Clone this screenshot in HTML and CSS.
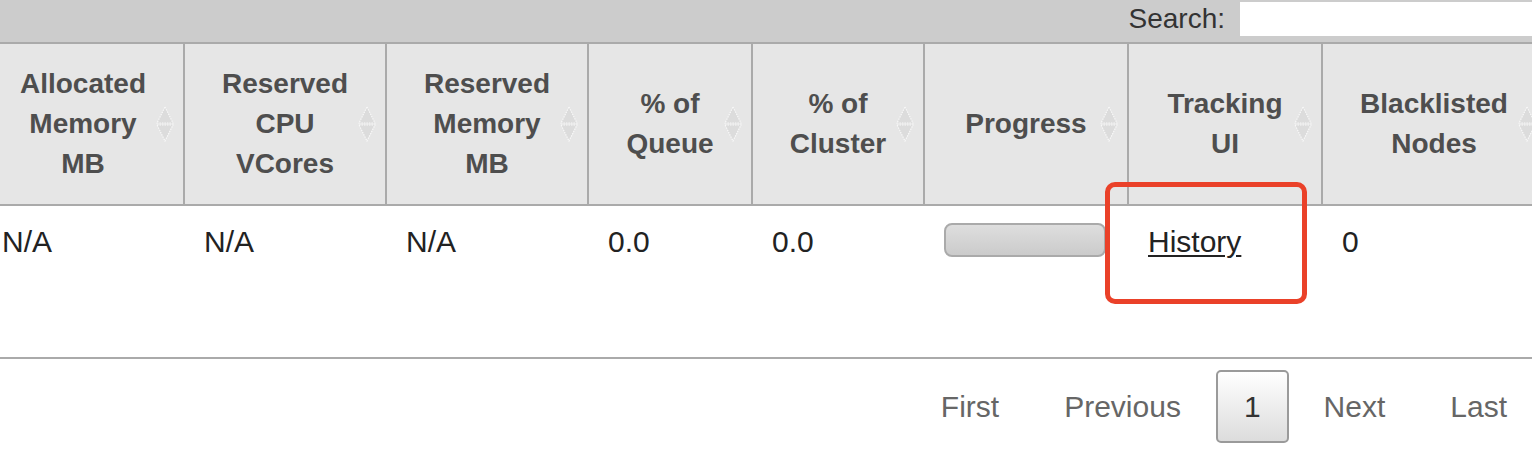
FILE: index.html
```html
<!DOCTYPE html>
<html>
<head>
<meta charset="utf-8">
<title>Applications</title>
<link rel="stylesheet" href="styles.css">
</head>
<body>
<div class="page">
  <div class="filter">
    <label class="filter-label">Search:</label>
    <input class="search" type="text">
  </div>
  <table class="grid">
    <thead>
      <tr>
        <th class="w202"><span>Allocated Memory MB</span><svg class="sort" viewBox="0 0 18 36" width="18" height="36"><path d="M9 1 L17 17 L1 17 Z"/><path d="M1 19 L17 19 L9 35 Z"/></svg></th>
        <th class="w202"><span>Reserved CPU VCores</span><svg class="sort" viewBox="0 0 18 36" width="18" height="36"><path d="M9 1 L17 17 L1 17 Z"/><path d="M1 19 L17 19 L9 35 Z"/></svg></th>
        <th class="w202"><span>Reserved Memory MB</span><svg class="sort" viewBox="0 0 18 36" width="18" height="36"><path d="M9 1 L17 17 L1 17 Z"/><path d="M1 19 L17 19 L9 35 Z"/></svg></th>
        <th class="w164"><span>% of Queue</span><svg class="sort" viewBox="0 0 18 36" width="18" height="36"><path d="M9 1 L17 17 L1 17 Z"/><path d="M1 19 L17 19 L9 35 Z"/></svg></th>
        <th class="w172"><span>% of Cluster</span><svg class="sort" viewBox="0 0 18 36" width="18" height="36"><path d="M9 1 L17 17 L1 17 Z"/><path d="M1 19 L17 19 L9 35 Z"/></svg></th>
        <th class="w204"><span>Progress</span><svg class="sort" viewBox="0 0 18 36" width="18" height="36"><path d="M9 1 L17 17 L1 17 Z"/><path d="M1 19 L17 19 L9 35 Z"/></svg></th>
        <th class="w194"><span>Tracking UI</span><svg class="sort" viewBox="0 0 18 36" width="18" height="36"><path d="M9 1 L17 17 L1 17 Z"/><path d="M1 19 L17 19 L9 35 Z"/></svg></th>
        <th class="w224"><span>Blacklisted Nodes</span><svg class="sort" viewBox="0 0 18 36" width="18" height="36"><path d="M9 1 L17 17 L1 17 Z"/><path d="M1 19 L17 19 L9 35 Z"/></svg></th>
      </tr>
    </thead>
    <tbody>
      <tr>
        <td>N/A</td>
        <td>N/A</td>
        <td>N/A</td>
        <td>0.0</td>
        <td>0.0</td>
        <td class="prog"><div class="bar"></div></td>
        <td><a class="link" href="#">History</a></td>
        <td>0</td>
      </tr>
    </tbody>
  </table>
  <div class="paging">
    <a class="pg">First</a>
    <a class="pg">Previous</a>
    <a class="pg current">1</a>
    <a class="pg">Next</a>
    <a class="pg">Last</a>
  </div>
  <div class="annot"></div>
</div>
</body>
</html>
```

FILE: styles.css
```css
html, body {
  margin: 0;
  padding: 0;
  background: #fff;
  overflow: hidden;
}

body {
  font-family: "Liberation Sans", Arial, Helvetica, sans-serif;
  width: 1532px;
  height: 452px;
}

.page {
  position: relative;
  width: 1564px;
  margin-left: -19px;
}

.filter {
  display: flex;
  justify-content: flex-end;
  align-items: center;
  background: #cccccc;
  height: 42px;
  box-sizing: border-box;
  padding: 2px 0 6px;
}

.filter-label {
  font-size: 28px;
  color: #333;
  margin-right: 15px;
}

.search {
  width: 305px;
  height: 34px;
  box-sizing: border-box;
  border: none;
  background: #fff;
  margin: 0;
  padding: 0;
  outline: none;
}

.grid {
  border-collapse: separate;
  border-spacing: 0;
  table-layout: fixed;
  width: 1564px;
  border-top: 2px solid #aaaaaa;
}

.grid th {
  position: relative;
  box-sizing: border-box;
  background: #e6e6e6;
  color: #4e4e4e;
  font-size: 28px;
  font-weight: bold;
  line-height: 40px;
  padding: 20px 22px;
  text-align: center;
  vertical-align: middle;
  border-left: 2px solid #aaaaaa;
  border-bottom: 2px solid #aaaaaa;
}

.w202 { width: 202px; }
.w164 { width: 164px; }
.w172 { width: 172px; }
.w204 { width: 204px; }
.w194 { width: 194px; }
.w224 { width: 224px; }

.sort {
  position: absolute;
  right: 9px;
  top: 50%;
  margin-top: -18px;
}

.sort path {
  fill: #dcdcdc;
  stroke: #f8f8f8;
  stroke-width: 1.2;
  stroke-dasharray: 1.5 1;
}

.grid tbody tr {
  height: 153px;
}

.grid td {
  box-sizing: border-box;
  font-size: 30px;
  line-height: 32px;
  color: #222;
  padding: 20px 20px 20px 21px;
  vertical-align: top;
  text-align: left;
  border-bottom: 2px solid #aaaaaa;
}

.grid td.prog {
  padding-top: 17px;
}

.bar {
  width: 162px;
  height: 34px;
  box-sizing: border-box;
  border: 2px solid #aaaaaa;
  border-radius: 8px;
  background: linear-gradient(#dedede, #cbcbcb);
}

.link {
  color: #222;
  text-decoration: underline;
  text-underline-offset: 3px;
  text-decoration-thickness: 2px;
}

.paging {
  display: flex;
  justify-content: flex-end;
  padding: 11px 8px 0 0;
}

.pg {
  display: block;
  font-size: 30px;
  line-height: 69px;
  padding: 0 28px;
  border: 2px solid transparent;
  margin-left: 5px;
  color: #666;
}

.pg.first {
  padding-right: 30px;
}

.pg.current {
  padding: 0 26px;
  color: #333;
  border-color: #9a9a9a;
  border-radius: 5px;
  background: linear-gradient(#ffffff, #dcdcdc);
}

.annot {
  position: absolute;
  left: 1124px;
  top: 182px;
  width: 202px;
  height: 122px;
  box-sizing: border-box;
  border: 5px solid #ea4129;
  border-radius: 10px;
}
```
